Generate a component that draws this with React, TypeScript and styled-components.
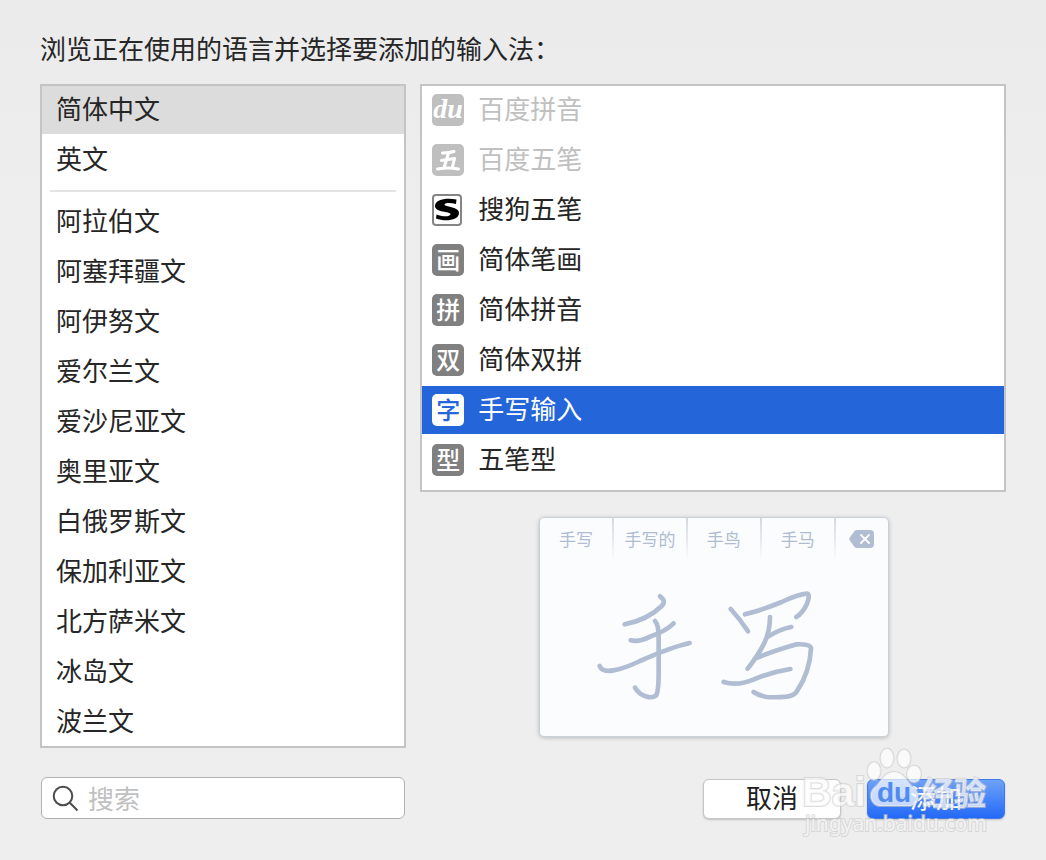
import React, { useState } from 'react';
import styled, { createGlobalStyle } from 'styled-components';

const GlobalStyle = createGlobalStyle`
  *, *::before, *::after { box-sizing: border-box; }
  html { min-height: 100%; background: #eeeeee; }
  body {
    margin: 0;
    font-family: "Noto Sans CJK SC", sans-serif;
    color: #262626;
  }
  button, input { font-family: inherit; color: inherit; }
`;

const Dialog = styled.main`
  position: relative;
  min-height: 100vh;
  padding: 28px 40px 40px;
  background: linear-gradient(#ebebeb, #eeeeee 260px);
`;

const Title = styled.h1`
  margin: 0 0 16px;
  font-size: 26px;
  line-height: 40px;
  font-weight: 400;
`;

const Columns = styled.div`
  display: grid;
  grid-template-columns: minmax(0, 5fr) minmax(0, 8fr);
  column-gap: 14px;
`;

const Side = styled.div`
  display: flex;
  flex-direction: column;
`;

const List = styled.ul`
  display: flex;
  flex-direction: column;
  gap: 2px;
  margin: 0;
  padding: 0;
  list-style: none;
  background: #ffffff;
  border: 2px solid #c4c4c4;
`;

const MethodList = styled(List)`
  padding-bottom: 6px;
`;

const Divider = styled.li`
  height: 2px;
  margin: 4px 8px;
  background: #e4e4e4;
`;

const Row = styled.button<{ $tone?: 'grey' | 'blue' }>`
  display: flex;
  align-items: center;
  gap: 14px;
  width: 100%;
  height: 48px;
  padding: 0 10px;
  border: 0;
  font-size: 26px;
  text-align: left;
  background: ${p => (p.$tone === 'grey' ? '#dcdcdc' : p.$tone === 'blue' ? '#2465d9' : 'transparent')};
  color: ${p => (p.$tone === 'blue' ? '#ffffff' : '#262626')};
  &:disabled { color: #c0c0c0; }
`;

const LanguageRow = styled(Row)`
  padding: 0 14px;
`;

const RowLabel = styled.span`
  padding-bottom: 4px;
  line-height: 44px;
`;

const BadgeDrawing = styled.svg`
  flex: none;
  display: block;
  width: 32px;
  height: 32px;
`;

const Badge = styled.span<{ $tone: 'grey' | 'pale' | 'white' }>`
  flex: none;
  width: 32px;
  height: 32px;
  border-radius: 5px;
  font-size: 24px;
  font-weight: 500;
  line-height: 30px;
  text-align: center;
  background: ${p => ({ grey: '#808080', pale: '#bfbfbf', white: '#ffffff' })[p.$tone]};
  color: ${p => (p.$tone === 'white' ? '#2465d9' : '#ffffff')};
`;

const LatinBadge = styled(Badge)`
  font-family: "Liberation Serif", serif;
  font-size: 28px;
  font-style: italic;
  font-weight: 700;
  line-height: 30px;
`;

const Preview = styled.section`
  align-self: center;
  width: 350px;
  max-width: 100%;
  margin: 25px 0 0 2px;
  background: #fbfcfd;
  border: 1px solid #c8d0da;
  border-radius: 5px;
  box-shadow: 0 1px 4px rgba(0, 0, 0, 0.22);
`;

const Candidates = styled.div`
  display: flex;
  height: 42px;
`;

const Candidate = styled.div`
  flex: 74 1 0;
  font-size: 17px;
  line-height: 42px;
  text-align: center;
  color: #b0bcd1;
  border-right: 2px solid;
  border-image: linear-gradient(#d3d7dd, #fbfcfd) 1;
`;

const Erase = styled.div`
  flex: 54 1 0;
  display: flex;
  align-items: center;
  justify-content: center;
`;

const Drawing = styled.svg`
  display: block;
  width: 100%;
`;

const Footer = styled.footer`
  display: grid;
  grid-template-columns: minmax(0, 5fr) minmax(0, 8fr);
  column-gap: 14px;
  align-items: end;
  margin-top: 29px;
`;

const SearchBox = styled.label`
  display: flex;
  align-items: center;
  gap: 9px;
  height: 42px;
  margin: 0 1px;
  padding: 0 10px;
  background: #ffffff;
  border: 1px solid #b2b2b2;
  border-radius: 6px;
  svg { flex: none; }
`;

const SearchInput = styled.input`
  flex: 1;
  min-width: 0;
  height: 40px;
  padding: 0 0 2px;
  border: 0;
  outline: 0;
  background: transparent;
  font-size: 26px;
  &::placeholder { color: #c0c0c0; opacity: 1; }
`;

const Actions = styled.div`
  display: flex;
  justify-content: flex-end;
  gap: 26px;
  padding-right: 1px;
`;

const Action = styled.button<{ $primary?: boolean }>`
  width: 138px;
  height: 40px;
  padding: 0 0 4px;
  border: 1px solid ${p => (p.$primary ? '#3f7bea' : '#c6c6c6')};
  border-radius: 6px;
  font-size: 26px;
  line-height: 34px;
  color: ${p => (p.$primary ? '#ffffff' : '#202020')};
  background: ${p => (p.$primary ? 'linear-gradient(#6ea2f8, #2369f6)' : '#ffffff')};
  box-shadow: 0 1px 2px rgba(0, 0, 0, 0.2);
`;

const Watermark = styled.svg`
  position: absolute;
  right: 46px;
  top: 740px;
  width: 200px;
  height: 110px;
  pointer-events: none;
`;

const pinned = ['简体中文', '英文'];
const languages = [
  '阿拉伯文', '阿塞拜疆文', '阿伊努文', '爱尔兰文', '爱沙尼亚文', '奥里亚文',
  '白俄罗斯文', '保加利亚文', '北方萨米文', '冰岛文', '波兰文',
];

type Method = { name: string; glyph: string; kind?: 'du' | 'wu' | 'sogou'; disabled?: boolean };

const methods: Method[] = [
  { name: '百度拼音', glyph: 'du', kind: 'du', disabled: true },
  { name: '百度五笔', glyph: '五', kind: 'wu', disabled: true },
  { name: '搜狗五笔', glyph: 'S', kind: 'sogou' },
  { name: '简体笔画', glyph: '画' },
  { name: '简体拼音', glyph: '拼' },
  { name: '简体双拼', glyph: '双' },
  { name: '手写输入', glyph: '字' },
  { name: '五笔型', glyph: '型' },
];

function MethodBadge({ method, active }: { method: Method; active: boolean }) {
  if (method.kind === 'sogou') {
    return (
      <BadgeDrawing viewBox="0 0 32 32" aria-hidden="true">
        <rect x="1" y="1" width="28" height="30" rx="3" fill="#fff" stroke="#858585" strokeWidth="2" />
        <path
          d="M24.500 5.500L24 10C19 8.500 13 8.500 12.500 10.500C12.500 13 27 12.500 27 19C27 26.500 13 28 4 24.500L4.500 20.500C10 23 18.500 23 18.500 20C18.500 17.500 3 18.500 3 12C3 5 15 3.500 24.500 5.500Z"
          fill="#000"
        />
      </BadgeDrawing>
    );
  }
  if (method.kind === 'wu') {
    return (
      <BadgeDrawing viewBox="0 0 32 32" aria-hidden="true">
        <rect width="32" height="32" rx="5" fill="#bfbfbf" />
        <g fill="none" stroke="#fff" strokeWidth="3" strokeLinecap="round" strokeLinejoin="round">
          <path d="M10.500 9Q17 9 22 7.500" />
          <path d="M16.500 9L12 24" />
          <path d="M9.500 16.500L22.500 14.500L20.500 23" />
          <path d="M5.500 25Q16 23 26.500 25" />
        </g>
      </BadgeDrawing>
    );
  }
  if (method.kind === 'du') {
    return <LatinBadge $tone="pale" aria-hidden="true">{method.glyph}</LatinBadge>;
  }
  return <Badge $tone={active ? 'white' : 'grey'} aria-hidden="true">{method.glyph}</Badge>;
}

function Handwriting() {
  return (
    <Drawing viewBox="0 0 348 176" aria-label="手写">
      <g
        transform="translate(40 15) scale(.33333)"
        fill="none"
        stroke="#b0bdd3"
        strokeWidth="14"
        strokeLinecap="round"
        strokeLinejoin="round"
      >
        <path d="M240 64Q260 78 245 93Q204 134 134 148" />
        <path d="M152 196Q178 202 212 184Q258 168 281 145" />
        <path d="M59 273Q66 292 100 286Q130 282 180 258Q275 216 329 204" />
        <path d="M225 138Q237 152 236 190V290Q236 350 228 362Q212 374 181 356Q170 348 165 338" />
        <path d="M452 102Q480 132 504 169" />
        <path d="M495 118Q550 104 605 81Q655 58 680 56Q692 58 681 86Q668 114 649 126" />
        <path d="M570 126Q570 170 552 206Q535 240 503 281" />
        <path d="M562 186Q600 162 634 156" />
        <path d="M532 248Q580 228 650 208Q692 206 693 220Q690 290 650 350Q642 362 620 365Q590 368 560 366Q536 362 521 351" />
        <path d="M431 321Q470 334 520 314Q570 292 631 282" />
      </g>
    </Drawing>
  );
}

function BaiduMark() {
  return (
    <Watermark viewBox="0 0 200 110" aria-hidden="true">
      <g fill="#ffffff" fillOpacity=".7" stroke="#c8c8c8" strokeOpacity=".6" strokeWidth="2" paintOrder="stroke">
        <text x="2" y="66" fontFamily="Liberation Sans" fontWeight="700" fontSize="41">Bai</text>
        <ellipse cx="74" cy="31" rx="6.500" ry="9" />
        <ellipse cx="87" cy="18" rx="6.500" ry="9.500" />
        <ellipse cx="104" cy="18.500" rx="6.500" ry="9" />
        <ellipse cx="114" cy="34" rx="7" ry="8.500" />
        <path d="M94 32C83 32 82 42 75 47C67 53 71 67 82 66H107C119 67 121 54 114 48C107 43 105 32 94 32Z" />
        <text x="122" y="65" fontWeight="700" fontSize="32">经验</text>
        <text x="5" y="91" fontFamily="Noto Sans" fontSize="21">jingyan.baidu.com</text>
      </g>
      <text x="77" y="62" fontFamily="Liberation Sans" fontWeight="700" fontSize="28" fill="#508bf2">du</text>
    </Watermark>
  );
}

export default function App() {
  const [language, setLanguage] = useState('简体中文');
  const [selected, setSelected] = useState('手写输入');
  const [query, setQuery] = useState('');

  const languageItem = (name: string) => (
    <li key={name}>
      <LanguageRow type="button" $tone={name === language ? 'grey' : undefined} onClick={() => setLanguage(name)}>
        <RowLabel>{name}</RowLabel>
      </LanguageRow>
    </li>
  );

  return (
    <>
      <GlobalStyle />
      <Dialog lang="zh-CN">
        <Title>浏览正在使用的语言并选择要添加的输入法：</Title>
        <Columns>
          <Side>
            <List aria-label="语言">
              {pinned.map(languageItem)}
              <Divider role="separator" />
              {languages.map(languageItem)}
            </List>
          </Side>
          <Side>
            <MethodList aria-label="输入法">
              {methods.map(method => (
                <li key={method.name}>
                  <Row
                    type="button"
                    disabled={method.disabled}
                    $tone={method.name === selected ? 'blue' : undefined}
                    onClick={() => setSelected(method.name)}
                  >
                    <MethodBadge method={method} active={method.name === selected} />
                    <RowLabel>{method.name}</RowLabel>
                  </Row>
                </li>
              ))}
            </MethodList>
            <Preview>
              <Candidates>
                {['手写', '手写的', '手鸟', '手马'].map(word => <Candidate key={word}>{word}</Candidate>)}
                <Erase>
                  <svg width="26" height="18" viewBox="0 0 26 18" aria-hidden="true">
                    <path d="M8 0H21Q25 0 25 4V14Q25 18 21 18H8Q6.500 18 5.500 17L.5 10Q0 9 .5 8L5.500 1Q6.500 0 8 0Z" fill="#b0bdd3" />
                    <path d="M12 5L20 13M20 5L12 13" stroke="#fff" strokeWidth="1.800" strokeLinecap="round" />
                  </svg>
                </Erase>
              </Candidates>
              <Handwriting />
            </Preview>
          </Side>
        </Columns>
        <Footer>
          <SearchBox>
            <svg width="27" height="27" viewBox="0 0 27 27" fill="none" stroke="#4c4c4c" strokeWidth="2" aria-hidden="true">
              <circle cx="11" cy="11" r="9.300" />
              <path d="M17.800 17.800L25.500 25.500" />
            </svg>
            <SearchInput
              type="search"
              aria-label="搜索"
              placeholder="搜索"
              value={query}
              onChange={event => setQuery(event.target.value)}
            />
          </SearchBox>
          <Actions>
            <Action type="button">取消</Action>
            <Action type="button" $primary>添加</Action>
          </Actions>
        </Footer>
        <BaiduMark />
      </Dialog>
    </>
  );
}
